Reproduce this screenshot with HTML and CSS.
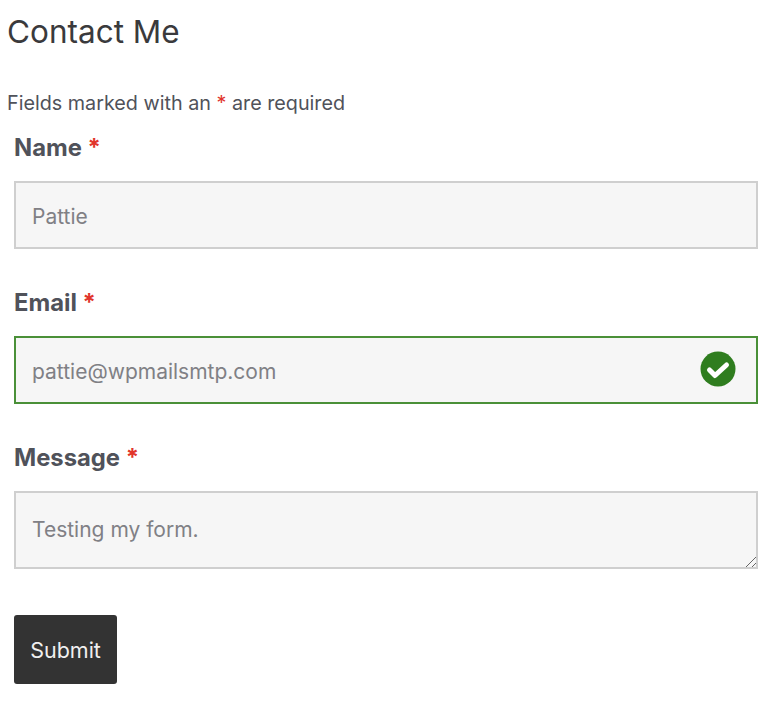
FILE: index.html
```html
<!DOCTYPE html>
<html lang="en">
<head>
    <meta charset="UTF-8">
    <meta name="viewport" content="width=device-width, initial-scale=1.0">
    <title>Contact Me</title>
    <link rel="stylesheet" href="styles.css">
</head>
<body>
    <h1>Contact Me</h1>
    <p class="required-note">Fields marked with an <span class="note-star">*</span> are required</p>

    <form class="contact-form">
        <div class="field">
            <label for="name">Name <span class="star">*</span></label>
            <input type="text" id="name" value="Pattie">
        </div>

        <div class="field">
            <label for="email">Email <span class="star">*</span></label>
            <div class="input-wrap">
                <input type="email" id="email" class="valid" value="pattie@wpmailsmtp.com">
                <svg class="check-icon" viewBox="0 0 36 36" aria-hidden="true">
                    <circle cx="18" cy="18" r="17.5" fill="#2f7d1f"/>
                    <path d="M9.5 19l5.5 5.5L26.5 14" fill="none" stroke="#fff" stroke-width="5" stroke-linecap="round" stroke-linejoin="round"/>
                </svg>
            </div>
        </div>

        <div class="field">
            <label for="message">Message <span class="star">*</span></label>
            <textarea id="message">Testing my form.</textarea>
        </div>

        <button type="button" class="submit-button">Submit</button>
    </form>
</body>
</html>
```

FILE: styles.css
```css
* {
    box-sizing: border-box;
}

body {
    margin: 0;
    padding: 0 10px 0 7px;
    font-family: "Inter", "Liberation Sans", sans-serif;
    background-color: #fff;
    color: #50525a;
}

h1 {
    margin: 0;
    padding-top: 12px;
    font-size: 31.5px;
    line-height: 40px;
    font-weight: 400;
    color: #3a3a3c;
}

.required-note {
    margin: 36px 0 0;
    font-size: 19.75px;
    line-height: 30px;
}

.note-star,
.star {
    color: #e1352b;
}

.contact-form {
    padding-top: 15px;
    padding-left: 7px;
}

.field {
    margin-bottom: 39px;
}

label {
    display: block;
    font-size: 23.8px;
    line-height: 30px;
    font-weight: 700;
    margin-bottom: 18px;
}

input,
textarea {
    display: block;
    width: 100%;
    padding: 0 16px;
    border: 2px solid #cfcfcf;
    background-color: #f6f6f6;
    font-family: inherit;
    font-size: 21px;
    color: #808085;
}

input {
    height: 68px;
    padding-top: 2px;
}

textarea {
    height: 78px;
    padding-top: 22px;
    line-height: 30px;
}

textarea::-webkit-resizer {
    background: linear-gradient(135deg, transparent 64%, #666 64% 70%, transparent 70% 84%, #666 84% 90%, transparent 90%);
}

.input-wrap {
    position: relative;
}

input.valid {
    border-color: #4a9038;
}

.check-icon {
    position: absolute;
    top: 15px;
    right: 22px;
    width: 36px;
    height: 36px;
}

.submit-button {
    display: block;
    width: 103px;
    height: 69px;
    margin-top: 46px;
    padding: 0;
    border: none;
    border-radius: 3px;
    background-color: #333;
    color: #f0f0f0;
    font-family: inherit;
    font-size: 21.5px;
}
```
